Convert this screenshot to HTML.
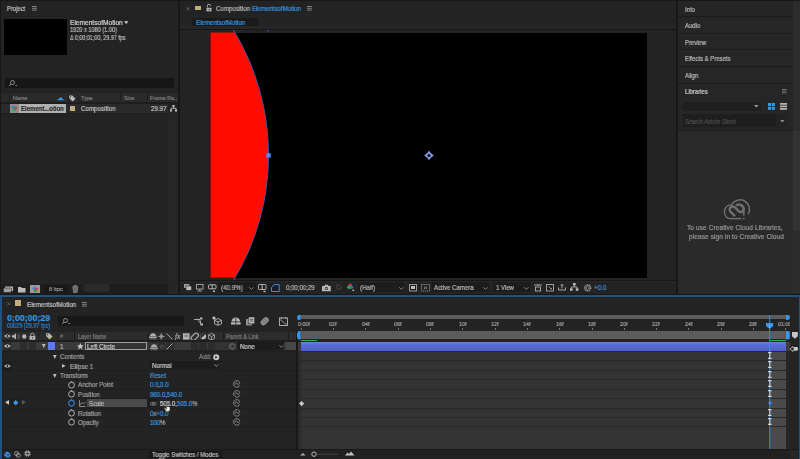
<!DOCTYPE html>
<html><head><meta charset="utf-8">
<style>
*{margin:0;padding:0;box-sizing:border-box}
html,body{width:800px;height:459px;overflow:hidden;background:#171717;font-family:"Liberation Sans",sans-serif;color:#a0a0a0;font-size:6.5px;line-height:1}
.a{position:absolute}
.t{position:absolute;white-space:nowrap;line-height:1;transform-origin:0 0;-webkit-text-stroke:0.2px currentColor;will-change:transform}
svg{position:absolute;overflow:visible}
</style></head><body>
<div class="a" style="left:1px;top:1px;width:177px;height:293px;background:#232323;"></div>
<div class="a" style="left:168px;top:113px;width:10px;height:170px;background:#262626;"></div>
<div class="t" style="left:7.0px;top:5.80px;color:#c8c8c8;font-size:6.6px;transform:scaleX(0.88);">Project</div>
<svg style="left:32px;top:6.3px" width="6" height="6"><path d="M0 .5H4.8M0 2.3H4.8M0 4.1H4.8" stroke="#8c8c8c" stroke-width=".9"/></svg>
<div class="a" style="left:4px;top:19px;width:63px;height:36px;background:#000;"></div>
<div class="t" style="left:70px;top:19.60px;color:#d0d0d0;font-size:6.6px;">ElementsofMotion</div>
<svg style="left:124px;top:20.5px" width="5" height="4"><path d="M0 .3h4.4L2.2 3z" fill="#d0d0d0"/></svg>
<div class="t" style="left:70px;top:27.05px;color:#bcbcbc;font-size:6.5px;transform:scaleX(0.86);">1920 x 1080 (1.00)</div>
<div class="t" style="left:70px;top:34.55px;color:#bcbcbc;font-size:6.5px;transform:scaleX(0.83);">Δ 0;00;01;00, 29.97 fps</div>
<div class="a" style="left:5px;top:78.1px;width:169px;height:9.7px;background:#161616;"></div>
<svg style="left:8px;top:80px" width="10" height="7"><circle cx="4.5" cy="2.5" r="2" fill="none" stroke="#9a9a9a" stroke-width="0.9"/><path d="M3 4L1 6.2" stroke="#9a9a9a" stroke-width="0.9"/><path d="M7 5h2.4l-1.2 1.2z" fill="#9a9a9a"/></svg>
<div class="a" style="left:1px;top:92.5px;width:177px;height:9.5px;background:#2a2a2a;"></div>
<div class="a" style="left:9.4px;top:94px;width:1px;height:7px;background:#1c1c1c;"></div>
<div class="a" style="left:67.5px;top:94px;width:1px;height:7px;background:#1c1c1c;"></div>
<div class="a" style="left:78px;top:94px;width:1px;height:7px;background:#1c1c1c;"></div>
<div class="a" style="left:120px;top:94px;width:1px;height:7px;background:#1c1c1c;"></div>
<div class="a" style="left:147px;top:94px;width:1px;height:7px;background:#1c1c1c;"></div>
<div class="t" style="left:12.5px;top:95.60px;color:#7d7d7d;font-size:5.8px;transform:scaleX(0.93);">Name</div>
<svg style="left:57px;top:96.7px" width="8" height="4"><path d="M0 3.3L3.7 0L7.4 3.3z" fill="#3596ee"/></svg>
<svg style="left:69px;top:94.5px" width="7" height="7"><path d="M0 0.5h3.3l3.2 3.2-2.9 2.9L0.3 3.3z" fill="#b8b8b8"/><circle cx="1.6" cy="1.8" r=".6" fill="#2a2a2a"/></svg>
<div class="t" style="left:81px;top:95.60px;color:#7d7d7d;font-size:5.8px;transform:scaleX(0.93);">Type</div>
<div class="t" style="left:123.5px;top:95.60px;color:#7d7d7d;font-size:5.8px;transform:scaleX(0.93);">Size</div>
<div class="t" style="left:150px;top:95.60px;color:#7d7d7d;font-size:5.8px;transform:scaleX(0.93);">Frame Ra..</div>
<div class="a" style="left:1px;top:102px;width:177px;height:1.6px;background:#1e1e1e;"></div>
<div class="a" style="left:1px;top:103.6px;width:167px;height:9.6px;background:#2a2a2a;"></div>
<div class="a" style="left:1px;top:113.2px;width:167px;height:0.9px;background:#1f1f1f;"></div>
<div class="a" style="left:10px;top:104.3px;width:8.7px;height:8.3px;background:#8e8e8e;"></div>
<svg style="left:11px;top:104.5px" width="7" height="7"><circle cx="2.2" cy="2.3" r="1.5" fill="#3a7be0"/><circle cx="4.6" cy="3.1" r="1.5" fill="#e03a3a"/><circle cx="3.2" cy="4.8" r="1.5" fill="#30a040"/></svg>
<div class="a" style="left:19.3px;top:103.6px;width:46.5px;height:9.6px;background:#b0b0b0;"></div>
<div class="t" style="left:20.8px;top:106.10px;color:#2a2a2a;font-size:6.8px;transform:scaleX(0.88);font-weight:bold">Element...otion</div>
<div class="a" style="left:69.5px;top:106px;width:5.3px;height:5.3px;background:#c2ac80;"></div>
<div class="t" style="left:81px;top:105.55px;color:#c4c4c4;font-size:6.7px;transform:scaleX(0.93);">Composition</div>
<div class="t" style="left:151px;top:105.55px;color:#c4c4c4;font-size:6.7px;transform:scaleX(0.93);">29.97</div>
<svg style="left:170px;top:104.5px" width="7" height="7"><rect x="2.5" y="0" width="2" height="2" fill="#c8c8c8"/><rect x="0" y="4.5" width="2" height="2" fill="#c8c8c8"/><rect x="5" y="4.5" width="2" height="2" fill="#c8c8c8"/><path d="M3.5 2v1.5M1 4.5V3.3h5v1.2" stroke="#c8c8c8" stroke-width=".8" fill="none"/></svg>
<div class="a" style="left:0px;top:283.5px;width:168px;height:10.5px;background:#1e1e1e;"></div>
<svg style="left:2.5px;top:285.5px" width="11" height="7"><rect x="2" y="0.5" width="8" height="4.5" fill="#bcbcbc"/><rect x="0.3" y="2" width="8" height="4.5" fill="#9c9c9c" stroke="#1e1e1e" stroke-width=".6"/></svg>
<svg style="left:17.7px;top:285.5px" width="8" height="7"><path d="M0 1h3l1 1h3.5v4.5H0z" fill="#bcbcbc"/></svg>
<div class="a" style="left:30px;top:284.5px;width:10px;height:8.5px;background:#9a9a9a;"></div>
<svg style="left:31.5px;top:285.5px" width="7" height="7"><circle cx="2.3" cy="2.3" r="1.5" fill="#3a7be0"/><circle cx="4.6" cy="3.1" r="1.5" fill="#e03a3a"/><circle cx="3.3" cy="4.7" r="1.5" fill="#30a040"/></svg>
<div class="a" style="left:43.5px;top:284.5px;width:24px;height:8.5px;background:#181818;"></div>
<div class="t" style="left:49px;top:286.20px;color:#9a9a9a;font-size:6.2px;transform:scaleX(0.93);">8 bpc</div>
<svg style="left:72px;top:285px" width="7" height="8"><path d="M0.3 1.3h6M2.3 1.2V.4h2v.8M1 2.3h4.6l-.5 5.2H1.5z" stroke="#8a8a8a" stroke-width=".8" fill="#6a6a6a"/></svg>
<div class="a" style="left:83px;top:284.3px;width:27px;height:8px;background:#2b2b2b;border-radius:4px"></div>
<div class="a" style="left:168px;top:283.5px;width:10px;height:10.5px;background:#262626;"></div>
<div class="a" style="left:180px;top:1px;width:496px;height:293px;background:#232323;"></div>
<svg style="left:186px;top:6.7px" width="4" height="4"><path d="M.3 .3l3 3M3.3 .3l-3 3" stroke="#6a6a6a" stroke-width=".8"/></svg>
<div class="a" style="left:195px;top:5.6px;width:5.6px;height:4.8px;background:#c2ac80;"></div>
<svg style="left:206px;top:4px" width="6" height="8"><path d="M1.3 3.5V2a1.7 1.7 0 0 1 3.4 0" stroke="#b0b0b0" stroke-width=".9" fill="none"/><rect x="0.5" y="3.8" width="5" height="3.6" fill="#b0b0b0"/><rect x="2.6" y="5" width=".9" height="1.3" fill="#232323"/></svg>
<div class="t" style="left:216px;top:5.70px;color:#b6b6b6;font-size:6.6px;transform:scaleX(0.93);">Composition <span style="color:#3596ee">ElementsofMotion</span></div>
<svg style="left:306.5px;top:6.3px" width="6" height="6"><path d="M0 .5H4.8M0 2.3H4.8M0 4.1H4.8" stroke="#8c8c8c" stroke-width=".9"/></svg>
<div class="a" style="left:192px;top:17.8px;width:66px;height:8px;background:#1a1a1a;"></div>
<div class="t" style="left:196px;top:19.80px;color:#3596ee;font-size:6.6px;transform:scaleX(0.93);">ElementsofMotion</div>
<div class="a" style="left:180px;top:26px;width:496px;height:3px;background:#262626;"></div>
<div class="a" style="left:180px;top:29px;width:496px;height:1px;background:#171717;"></div>
<div class="a" style="left:210.4px;top:32.5px;width:436.4px;height:245.3px;background:#000;"></div>
<svg style="left:0;top:0" width="800" height="459">
  <defs><clipPath id="cv"><rect x="210.4" y="32.5" width="436.4" height="245.3"/></clipPath></defs>
  <circle cx="27.3" cy="155.2" r="241" fill="#ff0c00" clip-path="url(#cv)"/>
  <path d="M233.5 30 A241 241 0 0 1 233.5 280.4" fill="none" stroke="#5a68c0" stroke-width=".8"/>
  <rect x="266.3" y="153.2" width="4.4" height="4.4" fill="#6282f0"/>
  <rect x="267.3" y="30.2" width="1.4" height="1.4" fill="#4d5fb0"/>
  <g transform="translate(429,155.5)"><path d="M0 -4.8Q1.9 -1.9 4.8 0Q1.9 1.9 0 4.8Q-1.9 1.9 -4.8 0Q-1.9 -1.9 0 -4.8Z" fill="#8896e0"/><circle r="1.5" fill="#0a0a14"/></g>
</svg>
<div class="a" style="left:180px;top:280.3px;width:496px;height:1px;background:#171717;"></div>
<div class="a" style="left:180px;top:281.3px;width:496px;height:1px;background:#282828;"></div>
<svg style="left:183.5px;top:284px" width="8" height="7"><rect x="0" y="0" width="5.5" height="4" fill="#9c9c9c"/><rect x="2" y="2" width="5.5" height="4.3" fill="#bdbdbd" stroke="#232323" stroke-width=".6"/></svg>
<svg style="left:195.5px;top:283.5px" width="8" height="8"><rect x=".5" y=".5" width="6.5" height="4.5" fill="none" stroke="#a8a8a8" stroke-width=".9"/><path d="M3.7 5v1.5M1.5 7h4.5" stroke="#a8a8a8" stroke-width=".9"/></svg>
<svg style="left:207.5px;top:283.5px" width="9" height="9"><rect x=".5" y=".8" width="7.5" height="4" rx="1" fill="none" stroke="#b8b8b8" stroke-width="1"/><path d="M4.2 .8v4" stroke="#b8b8b8"/><rect x="5" y="6.5" width="2" height="1.5" fill="#b8b8b8"/></svg>
<div class="a" style="left:218.6px;top:282px;width:37.4px;height:9.6px;background:#1c1c1c;border-radius:1.5px"></div>
<div class="t" style="left:221px;top:284.95px;color:#b0b0b0;font-size:6.7px;transform:scaleX(0.93);">(40.9%)</div>
<svg style="left:249px;top:286.5px" width="5" height="3"><path d="M.3 .3L2.4 2.4L4.5 .3" fill="none" stroke="#9a9a9a" stroke-width=".8"/></svg>
<svg style="left:258px;top:283.5px" width="9" height="9"><rect x=".5" y=".5" width="7.5" height="5" rx=".8" fill="none" stroke="#bcbcbc" stroke-width=".9"/><path d="M4.2 .5v5" stroke="#bcbcbc"/><rect x="5.5" y="6.8" width="2" height="1.4" fill="#bcbcbc"/></svg>
<div class="a" style="left:269.4px;top:282.5px;width:10.6px;height:10px;background:#1c1c1c;"></div>
<svg style="left:270.5px;top:283.5px" width="9" height="8"><path d="M.5 7.5V3.2L3.2 .6h5v6.9z" fill="none" stroke="#3596ee" stroke-width="1"/></svg>
<div class="t" style="left:286px;top:285.05px;color:#b4b4b4;font-size:6.5px;transform:scaleX(0.93);">0;00;00;29</div>
<svg style="left:322px;top:283.5px" width="9" height="8"><path d="M0 2h2.2l.9-1.3h2.6l.9 1.3h2.2v5.3H0z" fill="#b8b8b8"/><circle cx="4.4" cy="4.4" r="1.6" fill="#232323"/><circle cx="4.4" cy="4.4" r=".9" fill="#b8b8b8"/></svg>
<svg style="left:334px;top:283.5px" width="9" height="8"><path d="M1.5 6.5l2-2M3 3.5a1.6 1.6 0 0 1 2.3-2.3l1.3 1.3a1.6 1.6 0 0 1-2.3 2.3z" fill="none" stroke="#4a4a4a" stroke-width="1"/></svg>
<svg style="left:347px;top:283px" width="8" height="9"><circle cx="3.2" cy="2.3" r="1.7" fill="#e83030"/><circle cx="2" cy="4.3" r="1.7" fill="#30b040"/><circle cx="4.4" cy="4.3" r="1.7" fill="#3070e0"/><rect x="5.5" y="6.6" width="1.6" height="1.4" fill="#c8c8c8"/></svg>
<div class="a" style="left:357.8px;top:282px;width:46.6px;height:9.6px;background:#1c1c1c;border-radius:1.5px"></div>
<div class="t" style="left:360.4px;top:284.95px;color:#b0b0b0;font-size:6.7px;transform:scaleX(0.93);">(Half)</div>
<svg style="left:399px;top:286.5px" width="5" height="3"><path d="M.3 .3L2.4 2.4L4.5 .3" fill="none" stroke="#9a9a9a" stroke-width=".8"/></svg>
<div class="a" style="left:407.5px;top:283px;width:9.5px;height:9.5px;background:#1c1c1c;"></div>
<svg style="left:408.5px;top:284px" width="8" height="8"><rect x=".5" y=".5" width="7" height="6.5" fill="none" stroke="#a8a8a8" stroke-width=".9"/><rect x="2" y="2" width="4" height="3" fill="#bcbcbc"/></svg>
<svg style="left:420.5px;top:284px" width="9" height="8"><rect x=".5" y=".5" width="8" height="6.5" fill="none" stroke="#a0a0a0" stroke-width=".8" stroke-dasharray="1.2 .8"/><path d="M3 2.5l3 2.5M6 2.5l-3 2.5" stroke="#a0a0a0" stroke-width=".7"/></svg>
<div class="a" style="left:431.5px;top:282px;width:57.5px;height:9.6px;background:#1c1c1c;border-radius:1.5px"></div>
<div class="t" style="left:434px;top:284.95px;color:#b8b8b8;font-size:6.7px;transform:scaleX(0.9);">Active Camera</div>
<svg style="left:483px;top:286.5px" width="5" height="3"><path d="M.3 .3L2.4 2.4L4.5 .3" fill="none" stroke="#9a9a9a" stroke-width=".8"/></svg>
<div class="a" style="left:492.8px;top:282px;width:37.7px;height:9.6px;background:#1c1c1c;border-radius:1.5px"></div>
<div class="t" style="left:495.8px;top:284.95px;color:#b8b8b8;font-size:6.7px;transform:scaleX(0.9);">1 View</div>
<svg style="left:524px;top:286.5px" width="5" height="3"><path d="M.3 .3L2.4 2.4L4.5 .3" fill="none" stroke="#9a9a9a" stroke-width=".8"/></svg>
<svg style="left:534px;top:283.5px" width="9" height="8"><path d="M0 1H8M4 0v1.5" stroke="#b0b0b0" stroke-width=".9"/><rect x="1.5" y="3" width="5" height="4" fill="none" stroke="#b0b0b0" stroke-width=".9"/></svg>
<div class="a" style="left:545px;top:282.8px;width:10px;height:10px;background:#1c1c1c;"></div>
<svg style="left:546px;top:284px" width="8" height="8"><rect x=".5" y=".5" width="7" height="6.5" fill="none" stroke="#b0b0b0" stroke-width=".9"/><path d="M2.5 2.5l3 2.5M4.5 5h1V4" stroke="#b0b0b0" stroke-width=".8" fill="none"/></svg>
<svg style="left:558px;top:283.5px" width="9" height="8"><path d="M.5 3.5v2.5h7V3.5M4 .3v4.2M2.6 1.7L4 .3l1.4 1.4" stroke="#b0b0b0" stroke-width=".9" fill="none"/></svg>
<svg style="left:570px;top:283.3px" width="9" height="9"><rect x="3" y="0" width="2.6" height="2.4" fill="#c0c0c0"/><rect x="0" y="5.3" width="2.6" height="2.4" fill="#c0c0c0"/><rect x="5.8" y="5.3" width="2.6" height="2.4" fill="#c0c0c0"/><path d="M4.3 2.4v1.6M1.3 5.3V4h5.8v1.3" stroke="#c0c0c0" stroke-width=".8" fill="none"/></svg>
<svg style="left:584px;top:283.5px" width="8" height="8"><circle cx="3.7" cy="3.9" r="2.9" fill="none" stroke="#b0b0b0" stroke-width="1.4" stroke-dasharray="1.2 .6"/><circle cx="3.7" cy="3.9" r="1.3" fill="#232323" stroke="#b0b0b0" stroke-width=".6"/></svg>
<div class="t" style="left:594px;top:284.95px;color:#3596ee;font-size:6.7px;transform:scaleX(0.93);">+0.0</div>
<div class="a" style="left:678px;top:1px;width:115px;height:293px;background:#262626;"></div>
<div class="a" style="left:793px;top:1px;width:7px;height:293px;background:#2c2c2c;"></div>
<div class="a" style="left:678px;top:1px;width:115px;height:15px;background:#252525;"></div>
<div class="t" style="left:685px;top:6.50px;color:#bcbcbc;font-size:6.6px;transform:scaleX(0.9);">Info</div>
<div class="t" style="left:685px;top:23.00px;color:#bcbcbc;font-size:6.6px;transform:scaleX(0.9);">Audio</div>
<div class="t" style="left:685px;top:39.60px;color:#bcbcbc;font-size:6.6px;transform:scaleX(0.9);">Preview</div>
<div class="t" style="left:685px;top:56.20px;color:#bcbcbc;font-size:6.6px;transform:scaleX(0.9);">Effects &amp; Presets</div>
<div class="t" style="left:685px;top:72.80px;color:#bcbcbc;font-size:6.6px;transform:scaleX(0.9);">Align</div>
<div class="t" style="left:685px;top:89.40px;color:#d0d0d0;font-size:6.6px;transform:scaleX(0.9);">Libraries</div>
<div class="a" style="left:678px;top:15.8px;width:115px;height:1px;background:#1a1a1a;"></div>
<div class="a" style="left:678px;top:32.5px;width:115px;height:1px;background:#1a1a1a;"></div>
<div class="a" style="left:678px;top:49.3px;width:115px;height:1px;background:#1a1a1a;"></div>
<div class="a" style="left:678px;top:66px;width:115px;height:1px;background:#1a1a1a;"></div>
<div class="a" style="left:678px;top:82.5px;width:115px;height:1px;background:#1a1a1a;"></div>
<svg style="left:782px;top:89.4px" width="5" height="5"><path d="M0 .5H4.6M0 2.2H4.6M0 3.9H4.6" stroke="#7a7a7a" stroke-width=".9"/></svg>
<div class="a" style="left:682.7px;top:101.6px;width:78.3px;height:9.8px;background:#1f1f1f;"></div>
<svg style="left:753.7px;top:105px" width="5" height="3"><path d="M0 0h4.6L2.3 2.6z" fill="#9a9a9a"/></svg>
<svg style="left:767.5px;top:102.9px" width="7" height="7"><rect x="0" y="0" width="3" height="3" fill="#2da0f0"/><rect x="0" y="3.8" width="3" height="3" fill="#2da0f0"/><rect x="3.8" y="0" width="3" height="3" fill="#2da0f0"/><rect x="3.8" y="3.8" width="3" height="3" fill="#2da0f0"/></svg>
<svg style="left:780px;top:102.9px" width="7" height="7"><rect x="0" y="0" width="7" height="1.8" fill="#b0b0b0"/><rect x="0" y="2.5" width="7" height="1.8" fill="#b0b0b0"/><rect x="0" y="5" width="7" height="1.8" fill="#b0b0b0"/></svg>
<div class="a" style="left:683px;top:114.3px;width:104.3px;height:12.9px;background:#1e1e1e;"></div>
<div class="a" style="left:776px;top:114.3px;width:11.3px;height:12.9px;background:#232323;"></div>
<div class="t" style="left:685px;top:118.50px;color:#4e4e4e;font-size:6.4px;transform:scaleX(0.88);font-style:italic">Search Adobe Stock</div>
<svg style="left:779.5px;top:119.5px" width="5" height="3"><path d="M0 0h4.6L2.3 2.6z" fill="#8a8a8a"/></svg>
<div class="a" style="left:678px;top:127.3px;width:115px;height:4.3px;background:#242424;"></div>
<div class="a" style="left:678px;top:129.8px;width:115px;height:1.2px;background:#1f1f1f;"></div>
<div class="a" style="left:678px;top:131px;width:115px;height:163px;background:#2a2a2a;"></div>
<div class="a" style="left:793px;top:131px;width:7px;height:100px;background:#333;"></div>
<svg style="left:718px;top:195px" width="36" height="28"><path d="M11 23.6A7.2 7.2 0 0 1 13.6 9.7A8.3 8.3 0 0 1 30.3 19" fill="none" stroke="#6e6e6e" stroke-width="1.5"/><path d="M11 23.6H23.4" fill="none" stroke="#6e6e6e" stroke-width="1.5"/><path d="M17 21.2L12.6 16.8A3.1 3.1 0 0 1 17 12.4L21.2 16.6A3.1 3.1 0 0 0 25.2 12.2A4.6 4.6 0 0 0 18.2 10.6" fill="none" stroke="#6e6e6e" stroke-width="2.5"/><rect x="24.9" y="13.2" width="1.7" height="7.4" fill="#6e6e6e"/><rect x="24.9" y="22.7" width="1.7" height="1.7" fill="#6e6e6e"/></svg>
<div class="t" style="left:687.3px;top:225.45px;color:#959595;font-size:6.5px;letter-spacing:.1px">To use Creative Cloud Libraries,</div>
<div class="t" style="left:688.8px;top:233.85px;color:#959595;font-size:6.5px;letter-spacing:.1px">please sign in to Creative Cloud</div>
<div class="a" style="left:0px;top:295.2px;width:800px;height:164px;background:#24507e;"></div>
<div class="a" style="left:1.5px;top:296.8px;width:797px;height:162.2px;background:#232323;"></div>
<svg style="left:6.5px;top:301.5px" width="4" height="4"><path d="M.3 .3l3 3M3.3 .3l-3 3" stroke="#6a6a6a" stroke-width=".8"/></svg>
<div class="a" style="left:15px;top:300.2px;width:6px;height:5.8px;background:#c2ac80;"></div>
<div class="t" style="left:26.8px;top:301.50px;color:#c4c4c4;font-size:6.6px;transform:scaleX(0.93);">ElementsofMotion</div>
<svg style="left:82px;top:301.5px" width="6" height="6"><path d="M0 .5H4.8M0 2.3H4.8M0 4.1H4.8" stroke="#8c8c8c" stroke-width=".9"/></svg>
<div class="t" style="left:6.5px;top:313.00px;color:#3596ee;font-size:9.8px;transform:scaleX(0.9);font-weight:bold">0;00;00;29</div>
<div class="t" style="left:7px;top:322.90px;color:#2a80d8;font-size:6.4px;transform:scaleX(0.86);">00029 (29.97 fps)</div>
<div class="a" style="left:58px;top:316px;width:125.5px;height:9.5px;background:#181818;"></div>
<svg style="left:61px;top:317.5px" width="10" height="7"><circle cx="4.5" cy="2.5" r="2" fill="none" stroke="#9a9a9a" stroke-width=".9"/><path d="M3 4L1 6.2" stroke="#9a9a9a" stroke-width=".9"/><path d="M7 5h2.4l-1.2 1.2z" fill="#9a9a9a"/></svg>
<svg style="left:194px;top:316.5px" width="10" height="9"><path d="M0 2.5h6M4 1.5l2.5 2.5M4 3.5l2.5 2.5M6.5 4v3.5" stroke="#b8b8b8" stroke-width=".9" fill="none"/><rect x="6" y="0.5" width="2.5" height="2" fill="#b8b8b8"/><rect x="6.5" y="6.5" width="2.5" height="2" fill="#b8b8b8"/></svg>
<svg style="left:211.5px;top:316px" width="11" height="10"><circle cx="2" cy="2" r="1.6" fill="#c8c8c8"/><path d="M6 3.5l3.5 1.8v3.5L6 10.3 2.5 8.8V5.3z M2.5 5.3L6 7l3.5-1.7M6 7v3.3" stroke="#c8c8c8" stroke-width=".8" fill="none" transform="translate(0,-1)"/></svg>
<svg style="left:231px;top:316.5px" width="10" height="9"><path d="M.5 4.5a4.3 4 0 0 1 8.6 0z" fill="#b8b8b8"/><rect x="0" y="5.3" width="9.6" height="2.2" fill="#b8b8b8"/><path d="M4.8 1v6.5" stroke="#232323" stroke-width=".8"/></svg>
<svg style="left:245.7px;top:316.5px" width="9" height="9"><rect x="0" y="2" width="6" height="6.5" fill="#8c8c8c"/><rect x="2.5" y="0" width="6" height="6.8" fill="#c0c0c0" stroke="#232323" stroke-width=".5"/><path d="M3.8 2.3h3.4M3.8 4h3.4" stroke="#232323" stroke-width=".7"/></svg>
<svg style="left:259.7px;top:316.5px" width="10" height="9"><rect x="1.8" y="-0.3" width="5.8" height="9.2" rx="2.9" transform="rotate(45 4.7 4.3)" fill="#8e8e8e"/><path d="M3 6.5l4-4M1.8 5.2l4-4M4.3 7.8l4-4" stroke="#5a5a5a" stroke-width=".5"/></svg>
<svg style="left:279px;top:316.5px" width="9" height="9"><rect x=".5" y="1" width="8" height="7.5" fill="none" stroke="#b8b8b8" stroke-width=".9"/><path d="M2.5 0v2M6.5 0v2M1.3 2.8C3.5 2.8 5 7.3 7.7 7.3" stroke="#b8b8b8" stroke-width=".8" fill="none"/></svg>
<div class="a" style="left:0;top:0.8px">
<div class="a" style="left:1.5px;top:330.8px;width:295.5px;height:8.7px;background:#2c2c2c;"></div>
<svg style="left:4px;top:333.2px" width="7" height="4"><path d="M.2 2C1.8 0 5 0 6.6 2 5 4 1.8 4 .2 2z" fill="#b4b4b4"/><circle cx="3.4" cy="2" r="1" fill="#2c2c2c"/></svg>
<svg style="left:12px;top:332.3px" width="8" height="7"><path d="M0 2.2h1.6L4 .2v6.4L1.6 4.6H0z" fill="#b4b4b4"/><path d="M5.3 1.5a2.5 2.5 0 0 1 0 3.8M6.2.5a3.8 3.8 0 0 1 0 5.8" stroke="#7a7a7a" stroke-width=".6" fill="none"/></svg>
<svg style="left:21.5px;top:332.8px" width="5" height="5"><circle cx="2.3" cy="2.5" r="2.2" fill="#b4b4b4"/></svg>
<svg style="left:29px;top:332.1px" width="7" height="7"><path d="M1.7 3V1.9a1.7 1.7 0 0 1 3.4 0V3" stroke="#b4b4b4" stroke-width=".9" fill="none"/><rect x=".5" y="3" width="5.8" height="3.8" fill="#b4b4b4"/><rect x="3" y="4" width=".8" height="1.5" fill="#2c2c2c"/></svg>
<div class="a" style="left:38px;top:332px;width:1px;height:6.5px;background:#1c1c1c;"></div>
<div class="a" style="left:57px;top:332px;width:1px;height:6.5px;background:#1c1c1c;"></div>
<div class="a" style="left:74px;top:332px;width:1px;height:6.5px;background:#1c1c1c;"></div>
<div class="a" style="left:147px;top:332px;width:1px;height:6.5px;background:#1c1c1c;"></div>
<div class="a" style="left:223px;top:332px;width:1px;height:6.5px;background:#1c1c1c;"></div>
<div class="a" style="left:288px;top:332px;width:1px;height:6.5px;background:#1c1c1c;"></div>
<svg style="left:46px;top:332.3px" width="7" height="7"><path d="M0 .3h3.3l3.2 3.2-2.9 2.9L.3 3.3z" fill="#b8b8b8"/><circle cx="1.6" cy="1.7" r=".6" fill="#2c2c2c"/></svg>
<div class="t" style="left:60px;top:333.40px;color:#6c6c6c;font-size:5.8px;transform:scaleX(0.93);">#</div>
<div class="t" style="left:77.5px;top:333.15px;color:#7c7c7c;font-size:6.3px;transform:scaleX(0.83);">Layer Name</div>
<svg style="left:149px;top:332.3px" width="8" height="7"><path d="M1 3.3a3 3 0 0 1 6 0z" fill="#b0b0b0"/><rect x="0" y="3.6" width="8" height="1.3" fill="#b0b0b0"/><path d="M1.5 6.5l1-1.5M6.5 6.5l-1-1.5M4 6.5V5" stroke="#b0b0b0" stroke-width=".7"/></svg>
<svg style="left:158px;top:332.3px" width="7" height="7"><path d="M3.3 .2v6.4M.2 3.4h6.3" stroke="#b0b0b0" stroke-width=".7"/><path d="M3.3 1.5L5.2 3.4 3.3 5.3 1.4 3.4z" fill="none" stroke="#b0b0b0" stroke-width=".8"/></svg>
<svg style="left:166px;top:332.1px" width="7" height="7"><path d="M.5 .5l6 6" stroke="#b0b0b0" stroke-width=".9"/></svg>
<div class="t" style="left:174.5px;top:331.95px;color:#a8a8a8;font-size:7.5px;font-style:italic;font-family:'Liberation Serif',serif">fx</div>
<svg style="left:182.5px;top:332.3px" width="7" height="7"><rect x="0" y=".3" width="6.5" height="6.3" fill="#b8b8b8"/><rect x="1.3" y="1.5" width="3.9" height="2.6" fill="#888"/></svg>
<svg style="left:191px;top:332.1px" width="8" height="8"><rect x="1.5" y="-0.5" width="4.5" height="8.3" rx="2.2" transform="rotate(45 3.7 3.7)" fill="none" stroke="#a0a0a0" stroke-width="1.3"/></svg>
<svg style="left:200px;top:332.3px" width="7" height="7"><circle cx="3.2" cy="3.3" r="2.9" fill="#b8b8b8"/><path d="M1.2 5.3L5.3 1.2A2.9 2.9 0 0 0 1.2 5.3z" fill="#2c2c2c"/></svg>
<svg style="left:208px;top:332.1px" width="8" height="8"><path d="M3.5.3l3 1.6v3.6l-3 1.7-3-1.7V1.9z M.5 1.9l3 1.7 3-1.7M3.5 3.6v3.6" stroke="#b0b0b0" stroke-width=".8" fill="none"/></svg>
<div class="t" style="left:226px;top:333.15px;color:#7c7c7c;font-size:6.3px;transform:scaleX(0.86);">Parent &amp; Link</div>
</div>
<div class="a" style="left:1.5px;top:340.2px;width:295.5px;height:1.6px;background:#1e1e1e;"></div>
<div class="a" style="left:1.8px;top:341.8px;width:294.2px;height:8.7px;background:#3a3a3a;"></div>
<div class="a" style="left:3px;top:341.8px;width:7.5px;height:8.7px;background:#2b2b2b;"></div>
<svg style="left:4px;top:344.3px" width="7" height="4"><path d="M.2 2C1.8 0 5 0 6.6 2 5 4 1.8 4 .2 2z" fill="#c4c4c4"/><circle cx="3.4" cy="2" r="1" fill="#2b2b2b"/></svg>
<div class="a" style="left:20px;top:341.8px;width:7px;height:8.7px;background:#2c2c2c;"></div>
<div class="a" style="left:28.5px;top:341.8px;width:7px;height:8.7px;background:#2c2c2c;"></div>
<svg style="left:41.5px;top:344px" width="4" height="5"><path d="M0 0h3.6L1.8 4z" fill="#c0c0c0"/></svg>
<div class="a" style="left:48.3px;top:342.2px;width:6.7px;height:8px;background:#5f7ae8;"></div>
<div class="t" style="left:60px;top:343.55px;color:#b8b8b8;font-size:6.5px;transform:scaleX(0.93);">1</div>
<svg style="left:76.5px;top:342.8px" width="7" height="7"><path d="M3.3 0l.95 2.3 2.45.15-1.9 1.55.65 2.4L3.3 5.05 1.15 6.4l.65-2.4L-.1 2.45l2.45-.15z" fill="#c8c8c8"/></svg>
<div class="a" style="left:85px;top:341.8px;width:62px;height:8.7px;background:#333;border:1px solid #9c9c9c"></div>
<div class="t" style="left:87px;top:344.25px;color:#d0d0d0;font-size:6.7px;transform:scaleX(0.93);">Left Circle</div>
<div class="a" style="left:148px;top:341.8px;width:9px;height:8.7px;background:#333;"></div>
<svg style="left:149.5px;top:343.5px" width="8" height="7"><path d="M1 3.3a3 3 0 0 1 6 0z" fill="#a8a8a8"/><rect x="0" y="3.6" width="8" height="1.3" fill="#a8a8a8"/><path d="M1.5 6.5l1-1.5M6.5 6.5l-1-1.5M4 6.5V5" stroke="#a8a8a8" stroke-width=".7"/></svg>
<div class="a" style="left:157.5px;top:341.8px;width:7.5px;height:8.7px;background:#2c2c2c;"></div>
<svg style="left:158.5px;top:343.5px" width="6" height="6"><path d="M2.8 .8L4.6 2.8 2.8 4.8 1 2.8z" fill="none" stroke="#6a6a6a" stroke-width=".7"/></svg>
<div class="a" style="left:165.5px;top:341.8px;width:8px;height:8.7px;background:#2c2c2c;"></div>
<svg style="left:166px;top:343.3px" width="7" height="7"><path d="M.5 6.5l6-6" stroke="#b8b8b8" stroke-width=".9"/></svg>
<div class="a" style="left:191px;top:341.8px;width:7px;height:8.7px;background:#2c2c2c;"></div>
<div class="a" style="left:199px;top:341.8px;width:8px;height:8.7px;background:#2c2c2c;"></div>
<div class="a" style="left:207.5px;top:341.8px;width:7.5px;height:8.7px;background:#2c2c2c;"></div>
<div class="a" style="left:215px;top:341.8px;width:22px;height:8.7px;background:#333;"></div>
<svg style="left:228.5px;top:342.8px" width="7" height="7"><circle cx="3.3" cy="3.4" r="2.9" fill="none" stroke="#6c6c6c" stroke-width=".8"/><path d="M4.9 4.5a1.9 1.9 0 1 1 0-2.3" stroke="#6c6c6c" stroke-width=".8" fill="none"/></svg>
<div class="a" style="left:237px;top:342.3px;width:46.7px;height:8.2px;background:#1c1c1c;"></div>
<div class="t" style="left:240px;top:343.55px;color:#d0d0d0;font-size:6.7px;transform:scaleX(0.93);">None</div>
<svg style="left:279px;top:345px" width="5" height="3"><path d="M.3 .3L2.4 2.4L4.5 .3" fill="none" stroke="#9a9a9a" stroke-width=".8"/></svg>
<div class="a" style="left:285.7px;top:341.8px;width:10.3px;height:8.7px;background:#474747;"></div>
<div class="a" style="left:1.8px;top:351.2px;width:294.2px;height:1px;background:#1f1f1f;"></div>
<div class="a" style="left:1.8px;top:360.5px;width:294.2px;height:1px;background:#1f1f1f;"></div>
<div class="a" style="left:1.8px;top:370.0px;width:294.2px;height:1px;background:#1f1f1f;"></div>
<div class="a" style="left:1.8px;top:379.3px;width:294.2px;height:1px;background:#1f1f1f;"></div>
<div class="a" style="left:1.8px;top:388.8px;width:294.2px;height:1px;background:#1f1f1f;"></div>
<div class="a" style="left:1.8px;top:398.1px;width:294.2px;height:1px;background:#1f1f1f;"></div>
<div class="a" style="left:1.8px;top:407.5px;width:294.2px;height:1px;background:#1f1f1f;"></div>
<div class="a" style="left:1.8px;top:416.8px;width:294.2px;height:1px;background:#1f1f1f;"></div>
<div class="a" style="left:1.8px;top:426.0px;width:294.2px;height:1px;background:#1f1f1f;"></div>
<svg style="left:52.5px;top:355.2px" width="4" height="5"><path d="M0 0h3.6L1.8 4z" fill="#c0c0c0"/></svg>
<div class="t" style="left:60px;top:354.40px;color:#a0a0a0;font-size:6.6px;transform:scaleX(0.93);">Contents</div>
<div class="t" style="left:199px;top:354.40px;color:#8a8a8a;font-size:6.6px;transform:scaleX(0.93);">Add:</div>
<svg style="left:213px;top:354px" width="7" height="7"><circle cx="3.2" cy="3.2" r="3" fill="#c8c8c8"/><path d="M2.3 1.7v3L4.6 3.2z" fill="#232323"/></svg>
<div class="a" style="left:2.5px;top:361.5px;width:8px;height:9px;background:#1c1c1c;"></div>
<svg style="left:4px;top:364.4px" width="7" height="4"><path d="M.2 2C1.8 0 5 0 6.6 2 5 4 1.8 4 .2 2z" fill="#b8b8b8"/><circle cx="3.4" cy="2" r="1" fill="#1c1c1c"/></svg>
<svg style="left:62px;top:364.4px" width="5" height="5"><path d="M0 0v3.8L3.6 1.9z" fill="#c0c0c0"/></svg>
<div class="t" style="left:69.5px;top:363.80px;color:#a8a8a8;font-size:6.6px;transform:scaleX(0.93);">Ellipse 1</div>
<div class="a" style="left:150px;top:361.4px;width:70px;height:7.6px;background:#1c1c1c;"></div>
<div class="t" style="left:152px;top:362.85px;color:#c8c8c8;font-size:6.5px;transform:scaleX(0.93);">Normal</div>
<svg style="left:214px;top:364.3px" width="5" height="3"><path d="M.3 .3L2.4 2.4L4.5 .3" fill="none" stroke="#b0b0b0" stroke-width=".8"/></svg>
<svg style="left:52.5px;top:373.8px" width="4" height="5"><path d="M0 0h3.6L1.8 4z" fill="#c0c0c0"/></svg>
<div class="t" style="left:60px;top:373.10px;color:#a0a0a0;font-size:6.6px;transform:scaleX(0.93);">Transform</div>
<div class="t" style="left:150px;top:372.65px;color:#3596ee;font-size:6.5px;transform:scaleX(0.93);">Reset</div>
<svg style="left:68px;top:380.6px" width="8" height="8"><circle cx="3.5" cy="4.2" r="2.9" fill="none" stroke="#b0b0b0" stroke-width="1"/><path d="M2.6 .7h1.8M3.5 .7v.7M5.9 1.5l.7-.7" stroke="#b0b0b0" stroke-width=".8"/></svg>
<div class="t" style="left:78.4px;top:382.40px;color:#a0a0a0;font-size:6.6px;transform:scaleX(0.93);">Anchor Point</div>
<svg style="left:233px;top:380.4px" width="8" height="8"><path d="M6.7 2.2A3.3 3.3 0 1 0 6.9 5.2" stroke="#8e8e8e" stroke-width=".9" fill="none"/><path d="M2.1 4.6C1.9 2.6 3.9 2.2 4.3 3.7 4.7 5.2 6.3 4.7 6.6 2.3" stroke="#8e8e8e" stroke-width=".9" fill="none"/></svg>
<svg style="left:68px;top:389.9px" width="8" height="8"><circle cx="3.5" cy="4.2" r="2.9" fill="none" stroke="#b0b0b0" stroke-width="1"/><path d="M2.6 .7h1.8M3.5 .7v.7M5.9 1.5l.7-.7" stroke="#b0b0b0" stroke-width=".8"/></svg>
<div class="t" style="left:78.4px;top:391.70px;color:#a0a0a0;font-size:6.6px;transform:scaleX(0.93);">Position</div>
<svg style="left:233px;top:389.7px" width="8" height="8"><path d="M6.7 2.2A3.3 3.3 0 1 0 6.9 5.2" stroke="#8e8e8e" stroke-width=".9" fill="none"/><path d="M2.1 4.6C1.9 2.6 3.9 2.2 4.3 3.7 4.7 5.2 6.3 4.7 6.6 2.3" stroke="#8e8e8e" stroke-width=".9" fill="none"/></svg>
<svg style="left:68px;top:399.0px" width="8" height="8"><circle cx="3.5" cy="4.2" r="2.9" fill="none" stroke="#3596ee" stroke-width="1"/><path d="M2.6 .7h1.8M3.5 .7v.7M5.9 1.5l.7-.7" stroke="#3596ee" stroke-width=".8"/></svg>
<svg style="left:78.5px;top:400.1px" width="7" height="7"><path d="M.5 0v6.5h6M1 5l2-2.5 1.5 1.5 2-2" stroke="#b0b0b0" stroke-width=".7" fill="none"/></svg>
<div class="a" style="left:87px;top:398.7px;width:60px;height:8.3px;background:#4a4a4a;"></div>
<div class="t" style="left:89px;top:400.80px;color:#b4b4b4;font-size:6.6px;transform:scaleX(0.93);">Scale</div>
<svg style="left:233px;top:398.8px" width="8" height="8"><path d="M6.7 2.2A3.3 3.3 0 1 0 6.9 5.2" stroke="#8e8e8e" stroke-width=".9" fill="none"/><path d="M2.1 4.6C1.9 2.6 3.9 2.2 4.3 3.7 4.7 5.2 6.3 4.7 6.6 2.3" stroke="#8e8e8e" stroke-width=".9" fill="none"/></svg>
<svg style="left:68px;top:408.7px" width="8" height="8"><circle cx="3.5" cy="4.2" r="2.9" fill="none" stroke="#b0b0b0" stroke-width="1"/><path d="M2.6 .7h1.8M3.5 .7v.7M5.9 1.5l.7-.7" stroke="#b0b0b0" stroke-width=".8"/></svg>
<div class="t" style="left:78.4px;top:410.50px;color:#a0a0a0;font-size:6.6px;transform:scaleX(0.93);">Rotation</div>
<svg style="left:233px;top:408.5px" width="8" height="8"><path d="M6.7 2.2A3.3 3.3 0 1 0 6.9 5.2" stroke="#8e8e8e" stroke-width=".9" fill="none"/><path d="M2.1 4.6C1.9 2.6 3.9 2.2 4.3 3.7 4.7 5.2 6.3 4.7 6.6 2.3" stroke="#8e8e8e" stroke-width=".9" fill="none"/></svg>
<svg style="left:68px;top:418.2px" width="8" height="8"><circle cx="3.5" cy="4.2" r="2.9" fill="none" stroke="#b0b0b0" stroke-width="1"/><path d="M2.6 .7h1.8M3.5 .7v.7M5.9 1.5l.7-.7" stroke="#b0b0b0" stroke-width=".8"/></svg>
<div class="t" style="left:78.4px;top:420.00px;color:#a0a0a0;font-size:6.6px;transform:scaleX(0.93);">Opacity</div>
<svg style="left:233px;top:418.0px" width="8" height="8"><path d="M6.7 2.2A3.3 3.3 0 1 0 6.9 5.2" stroke="#8e8e8e" stroke-width=".9" fill="none"/><path d="M2.1 4.6C1.9 2.6 3.9 2.2 4.3 3.7 4.7 5.2 6.3 4.7 6.6 2.3" stroke="#8e8e8e" stroke-width=".9" fill="none"/></svg>
<div class="t" style="left:150px;top:382.25px;color:#a0a0a0;font-size:6.5px;transform:scaleX(0.93);"><span style="color:#3596ee">0.0</span>,<span style="color:#3596ee">0.0</span></div>
<div class="t" style="left:150px;top:391.65px;color:#a0a0a0;font-size:6.5px;transform:scaleX(0.93);"><span style="color:#3596ee">960.0</span>,<span style="color:#3596ee">540.0</span></div>
<div class="a" style="left:148px;top:399px;width:9px;height:8px;background:#1c1c1c;"></div>
<svg style="left:149.5px;top:401.5px" width="7" height="4"><rect x=".4" y=".4" width="3.6" height="2.8" rx="1.4" fill="none" stroke="#9a9a9a" stroke-width=".7"/><rect x="2.6" y=".4" width="3.6" height="2.8" rx="1.4" fill="none" stroke="#9a9a9a" stroke-width=".7"/></svg>
<div class="t" style="left:159.5px;top:400.65px;color:#a0a0a0;font-size:6.5px;transform:scaleX(0.93);"><span style="color:#d8d8d8">505.0</span>,<span style="color:#3596ee">505.0</span>%</div>
<div class="t" style="left:150px;top:410.55px;color:#a0a0a0;font-size:6.5px;transform:scaleX(0.93);"><span style="color:#3596ee">0</span>x<span style="color:#3596ee">+0.0</span></div>
<div class="t" style="left:150px;top:420.05px;color:#a0a0a0;font-size:6.5px;transform:scaleX(0.93);"><span style="color:#3596ee">100</span>%</div>
<svg style="left:162.6px;top:403px" width="9" height="10"><g transform="scale(.56)"><path d="M6 1C6 .2 7.5 .2 7.5 1V7.2L8 6.6C8.5 6 9.5 6 9.5 6.9 10 6.3 11 6.3 11 7.2 11.5 6.8 12.5 6.9 12.5 7.7V11C12.5 13.5 11 15 9 15H7.5C6 15 5 14 4.3 12.8L2.2 9.3C1.8 8.5 2.8 7.8 3.5 8.5L6 11Z" fill="#f2f2f2" stroke="#333" stroke-width=".8"/></g></svg>
<svg style="left:4.7px;top:400.3px" width="5" height="5"><path d="M4 0v4.7L0 2.35z" fill="#c8c8c8"/></svg>
<div class="a" style="left:11px;top:398.8px;width:9px;height:8px;background:#1e1e1e;"></div>
<svg style="left:12.8px;top:399.8px" width="6" height="6"><path d="M2.7 0L5.4 2.7 2.7 5.4 0 2.7z" fill="#3596ee"/></svg>
<svg style="left:21.9px;top:400.3px" width="5" height="5"><path d="M0 0v4.7L3.6 2.35z" fill="#5a5a5a"/></svg>
<div class="a" style="left:296px;top:330.8px;width:1.5px;height:118.2px;background:#181818;"></div>
<div class="a" style="left:1.5px;top:448.6px;width:797px;height:11px;background:#212121;"></div>
<div class="a" style="left:1.5px;top:448.6px;width:797px;height:0.9px;background:#191919;"></div>
<svg style="left:4px;top:450.5px" width="7" height="7"><path d="M.5 2L3 .5 6.5 2.5v3L4 7 .5 5z" fill="#3596ee"/><path d="M.5 2L4 4v3M4 4l2.5-1.5" stroke="#1e1e1e" stroke-width=".6" fill="none"/></svg>
<svg style="left:14px;top:450.5px" width="7" height="7"><circle cx="2.5" cy="2.5" r="2" fill="none" stroke="#b0b0b0" stroke-width=".8"/><circle cx="4.3" cy="4.3" r="2" fill="none" stroke="#b0b0b0" stroke-width=".8"/></svg>
<svg style="left:24px;top:450.3px" width="7" height="7"><path d="M1.5 1.5h4v4h-4z" fill="none" stroke="#a0a0a0" stroke-width=".8"/><path d="M2.5 0v7M4.5 0v7M0 2.5h7M0 4.5h7" stroke="#a0a0a0" stroke-width=".6"/></svg>
<div class="a" style="left:149px;top:450.7px;width:73.4px;height:7.5px;background:#181818;"></div>
<div class="t" style="left:152px;top:451.85px;color:#c0c0c0;font-size:6.3px;transform:scaleX(0.95);">Toggle Switches / Modes</div>
<div class="a" style="left:297.5px;top:315px;width:492.5px;height:4px;background:#5c5c5c;"></div>
<svg style="left:296.8px;top:314.6px" width="4" height="5"><path d="M3.5 0v5H2A2 2.5 0 0 1 2 0z" fill="#3596ee"/></svg>
<svg style="left:786.3px;top:314.6px" width="4" height="5"><path d="M0 0v5h1.5A2 2.5 0 0 0 1.5 0z" fill="#3596ee"/></svg>
<div class="a" style="left:297px;top:319px;width:493px;height:12px;overflow:hidden">
<div class="t" style="left:0.5px;top:1.5px;color:#a4a4a4;font-size:6.2px;transform:scaleX(.87)">0:00f</div>
<div class="a" style="left:3.8px;top:9.1px;width:0.8px;height:1.9px;background:#7a7a7a"></div>
<div class="t" style="left:32.4px;top:1.5px;color:#a4a4a4;font-size:6.2px;transform:scaleX(.87)">02f</div>
<div class="a" style="left:36.1px;top:9.1px;width:0.8px;height:1.9px;background:#7a7a7a"></div>
<div class="t" style="left:64.7px;top:1.5px;color:#a4a4a4;font-size:6.2px;transform:scaleX(.87)">04f</div>
<div class="a" style="left:68.4px;top:9.1px;width:0.8px;height:1.9px;background:#7a7a7a"></div>
<div class="t" style="left:97.0px;top:1.5px;color:#a4a4a4;font-size:6.2px;transform:scaleX(.87)">06f</div>
<div class="a" style="left:100.7px;top:9.1px;width:0.8px;height:1.9px;background:#7a7a7a"></div>
<div class="t" style="left:129.3px;top:1.5px;color:#a4a4a4;font-size:6.2px;transform:scaleX(.87)">08f</div>
<div class="a" style="left:133.0px;top:9.1px;width:0.8px;height:1.9px;background:#7a7a7a"></div>
<div class="t" style="left:161.6px;top:1.5px;color:#a4a4a4;font-size:6.2px;transform:scaleX(.87)">10f</div>
<div class="a" style="left:165.3px;top:9.1px;width:0.8px;height:1.9px;background:#7a7a7a"></div>
<div class="t" style="left:193.9px;top:1.5px;color:#a4a4a4;font-size:6.2px;transform:scaleX(.87)">12f</div>
<div class="a" style="left:197.6px;top:9.1px;width:0.8px;height:1.9px;background:#7a7a7a"></div>
<div class="t" style="left:226.2px;top:1.5px;color:#a4a4a4;font-size:6.2px;transform:scaleX(.87)">14f</div>
<div class="a" style="left:229.9px;top:9.1px;width:0.8px;height:1.9px;background:#7a7a7a"></div>
<div class="t" style="left:258.5px;top:1.5px;color:#a4a4a4;font-size:6.2px;transform:scaleX(.87)">16f</div>
<div class="a" style="left:262.2px;top:9.1px;width:0.8px;height:1.9px;background:#7a7a7a"></div>
<div class="t" style="left:290.8px;top:1.5px;color:#a4a4a4;font-size:6.2px;transform:scaleX(.87)">18f</div>
<div class="a" style="left:294.5px;top:9.1px;width:0.8px;height:1.9px;background:#7a7a7a"></div>
<div class="t" style="left:323.1px;top:1.5px;color:#a4a4a4;font-size:6.2px;transform:scaleX(.87)">20f</div>
<div class="a" style="left:326.8px;top:9.1px;width:0.8px;height:1.9px;background:#7a7a7a"></div>
<div class="t" style="left:355.4px;top:1.5px;color:#a4a4a4;font-size:6.2px;transform:scaleX(.87)">22f</div>
<div class="a" style="left:359.1px;top:9.1px;width:0.8px;height:1.9px;background:#7a7a7a"></div>
<div class="t" style="left:387.7px;top:1.5px;color:#a4a4a4;font-size:6.2px;transform:scaleX(.87)">24f</div>
<div class="a" style="left:391.4px;top:9.1px;width:0.8px;height:1.9px;background:#7a7a7a"></div>
<div class="t" style="left:420.0px;top:1.5px;color:#a4a4a4;font-size:6.2px;transform:scaleX(.87)">26f</div>
<div class="a" style="left:423.7px;top:9.1px;width:0.8px;height:1.9px;background:#7a7a7a"></div>
<div class="t" style="left:452.3px;top:1.5px;color:#a4a4a4;font-size:6.2px;transform:scaleX(.87)">28f</div>
<div class="a" style="left:456.0px;top:9.1px;width:0.8px;height:1.9px;background:#7a7a7a"></div>
<div class="t" style="left:481.0px;top:1.5px;color:#a4a4a4;font-size:6.2px;transform:scaleX(.87)">01:00</div>
<div class="a" style="left:488.3px;top:9.1px;width:0.8px;height:1.9px;background:#7a7a7a"></div>
</div>
<div class="a" style="left:300.5px;top:330.8px;width:489px;height:8.2px;background:#5c5c5c;"></div>
<svg style="left:296.8px;top:330.6px" width="4" height="9"><path d="M3.7 0v8.6H2.2A2.2 4.3 0 0 1 2.2 0z" fill="#3596ee"/></svg>
<svg style="left:786.2px;top:330.6px" width="4" height="9"><path d="M0 0v8.6h1.5A2.2 4.3 0 0 0 1.5 0z" fill="#3596ee"/></svg>
<svg style="left:792px;top:332px" width="6" height="7"><path d="M0 0h5.8v4.2L2.9 6.8 0 4.2z" fill="#c8c8c8"/></svg>
<div class="a" style="left:301px;top:339.9px;width:16px;height:1.6px;background:#22b43a;"></div>
<div class="a" style="left:770px;top:339.9px;width:16px;height:1.6px;background:#22b43a;"></div>
<div class="a" style="left:297.5px;top:341.8px;width:3.5px;height:9.2px;background:#3a3a3a;"></div>
<div class="a" style="left:301px;top:341.8px;width:485px;height:9.2px;background:#6070db;background:linear-gradient(#7080de,#5a6cd6 30%,#4d60cc)"></div>
<div class="a" style="left:786px;top:341.8px;width:3.5px;height:9.2px;background:#3e3e3e;"></div>
<svg style="left:790px;top:345.5px" width="8" height="6"><path d="M0 3L3 .5v1.5h4.5v2H3v1.5z" fill="none" stroke="#c8c8c8" stroke-width=".8"/><rect x="4" y="1" width="3.5" height="3.5" fill="#c8c8c8"/></svg>
<div class="a" style="left:297.5px;top:351.2px;width:3.5px;height:97.8px;background:#2b2b2b;"></div>
<div class="a" style="left:301px;top:351.2px;width:485px;height:97.8px;background:#333;"></div>
<div class="a" style="left:770px;top:351.2px;width:16px;height:97.8px;background:#4a4a4a;"></div>
<div class="a" style="left:786px;top:351.2px;width:4px;height:97.8px;background:#262626;"></div>
<div class="a" style="left:301px;top:351.2px;width:485px;height:1px;background:#282828;"></div>
<div class="a" style="left:301px;top:360.2px;width:485px;height:1px;background:#282828;"></div>
<div class="a" style="left:301px;top:369.8px;width:485px;height:1px;background:#282828;"></div>
<div class="a" style="left:301px;top:379.2px;width:485px;height:1px;background:#282828;"></div>
<div class="a" style="left:301px;top:388.8px;width:485px;height:1px;background:#282828;"></div>
<div class="a" style="left:301px;top:398.1px;width:485px;height:1px;background:#282828;"></div>
<div class="a" style="left:301px;top:407.5px;width:485px;height:1px;background:#282828;"></div>
<div class="a" style="left:301px;top:416.8px;width:485px;height:1px;background:#282828;"></div>
<div class="a" style="left:301px;top:425.8px;width:485px;height:1px;background:#282828;"></div>
<svg style="left:0px;top:0px" width="800" height="459"><rect x="769.2" y="315" width="1" height="134" fill="#3a8ee0"/></svg>
<svg style="left:767.9px;top:352.2px" width="5" height="8"><path d="M0 .6h3.6M0 6.4h3.6M1.8 .6v5.8" stroke="#cfcfcf" stroke-width="1.1"/></svg>
<svg style="left:767.9px;top:361.4px" width="5" height="8"><path d="M0 .6h3.6M0 6.4h3.6M1.8 .6v5.8" stroke="#cfcfcf" stroke-width="1.1"/></svg>
<svg style="left:767.9px;top:371.0px" width="5" height="8"><path d="M0 .6h3.6M0 6.4h3.6M1.8 .6v5.8" stroke="#cfcfcf" stroke-width="1.1"/></svg>
<svg style="left:767.9px;top:380.2px" width="5" height="8"><path d="M0 .6h3.6M0 6.4h3.6M1.8 .6v5.8" stroke="#cfcfcf" stroke-width="1.1"/></svg>
<svg style="left:767.9px;top:389.8px" width="5" height="8"><path d="M0 .6h3.6M0 6.4h3.6M1.8 .6v5.8" stroke="#cfcfcf" stroke-width="1.1"/></svg>
<svg style="left:767.9px;top:408.6px" width="5" height="8"><path d="M0 .6h3.6M0 6.4h3.6M1.8 .6v5.8" stroke="#cfcfcf" stroke-width="1.1"/></svg>
<svg style="left:767.9px;top:418.1px" width="5" height="8"><path d="M0 .6h3.6M0 6.4h3.6M1.8 .6v5.8" stroke="#cfcfcf" stroke-width="1.1"/></svg>
<svg style="left:298.5px;top:400.5px" width="6" height="6"><path d="M2.6 0L5.2 2.6 2.6 5.2 0 2.6z" fill="#c8c8c8"/></svg>
<svg style="left:767.6px;top:400.9px" width="5" height="5"><path d="M2 0L4 2 2 4 0 2z" fill="#3596ee"/></svg>
<svg style="left:765.8px;top:322.8px" width="8" height="6"><path d="M0 0h7.2v3.2L3.6 5.8 0 3.2z" fill="#3596ee"/><path d="M3.6 1.5v4" stroke="#9cc8f5" stroke-width=".6"/></svg>
<svg style="left:300px;top:451.5px" width="6" height="4"><path d="M0 3.5h5.5L3 1z" fill="#b0b0b0"/></svg>
<svg style="left:311px;top:450.8px" width="30" height="7"><circle cx="3" cy="3.2" r="2.2" fill="none" stroke="#b8b8b8" stroke-width="1"/><path d="M5.5 3.2H27" stroke="#4a4a4a" stroke-width=".8"/></svg>
<svg style="left:344.8px;top:451px" width="10" height="5"><path d="M0 4.5L2.5 1.5 4 3 6 .5 9.5 4.5z" fill="#c0c0c0"/></svg>
<div class="a" style="left:789.5px;top:449.5px;width:8px;height:10px;background:#262626;"></div>
</body></html>
